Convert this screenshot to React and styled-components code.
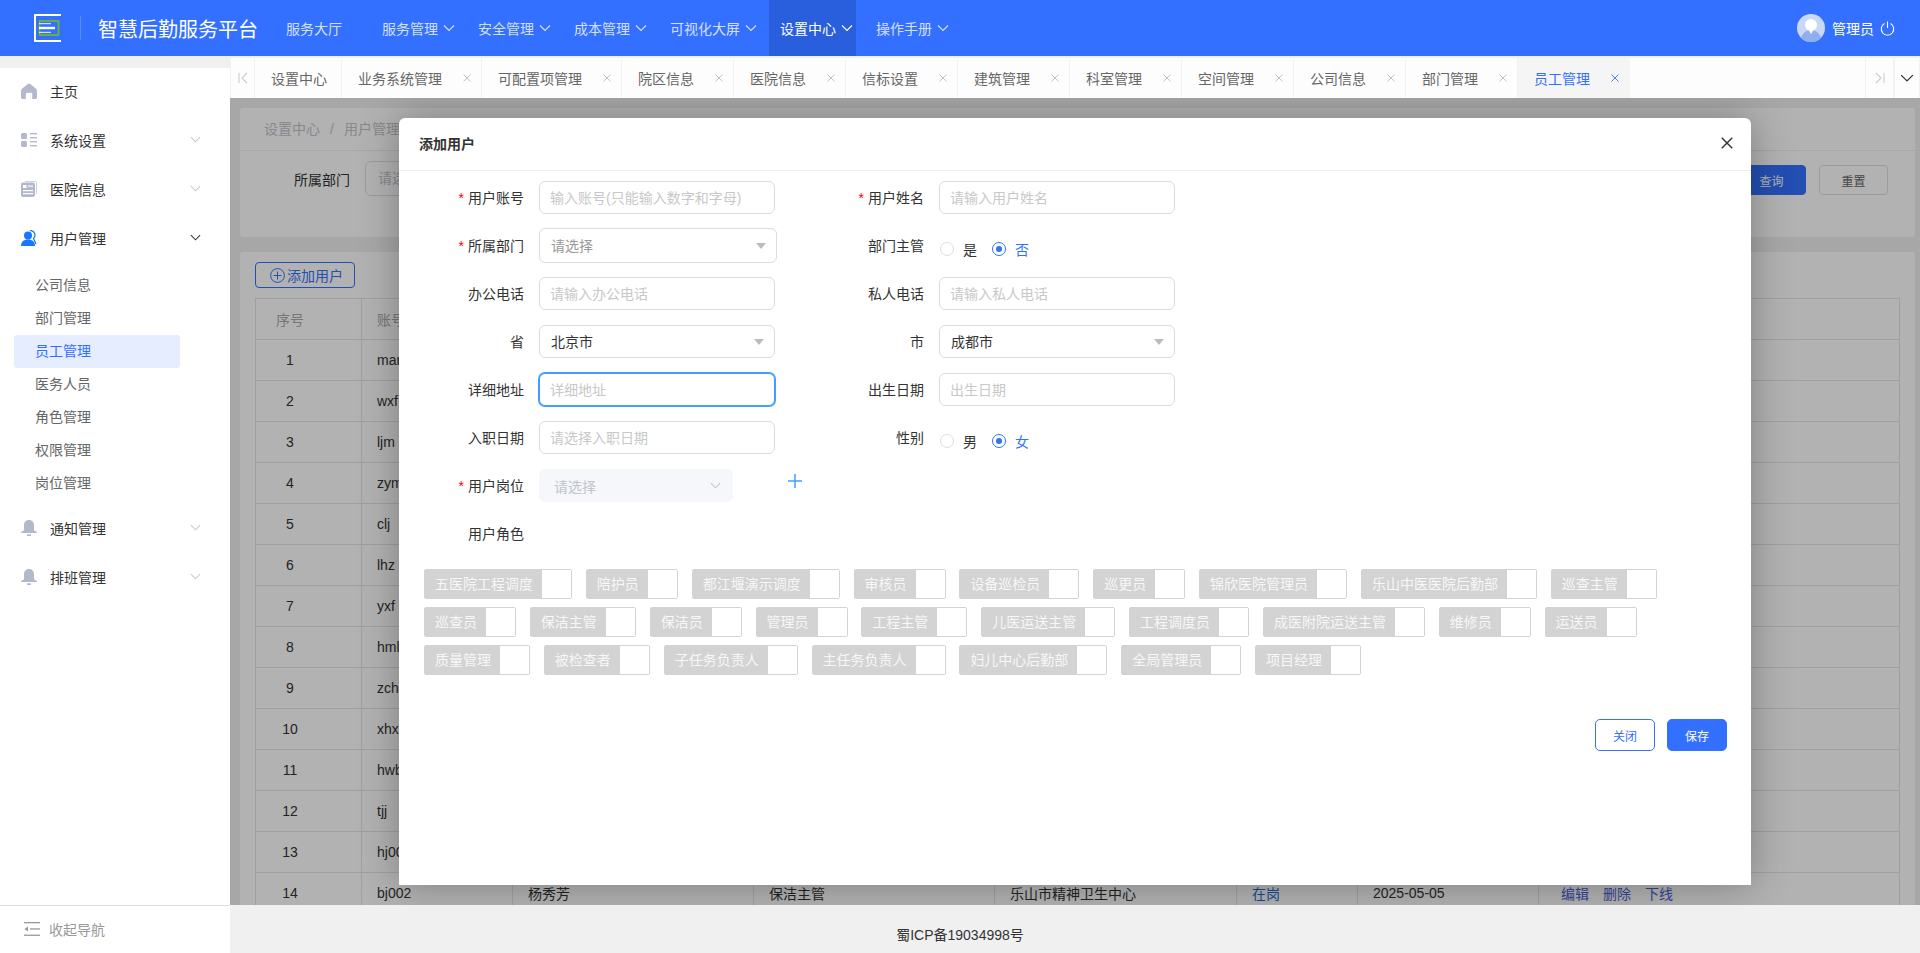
import styled, { createGlobalStyle } from 'styled-components'

const GlobalStyle = createGlobalStyle`
  html, body {
    margin: 0;
    padding: 0;
    height: 100%;
    overflow: hidden;
  }
  body {
    font-family: "Liberation Sans", "Noto Sans CJK SC", sans-serif;
    font-size: 14px;
    color: #333;
    background: #f0f0f0;
  }
  * {
    box-sizing: border-box;
  }
`

const navItems = [
  { label: '服务大厅', plain: true },
  { label: '服务管理' },
  { label: '安全管理' },
  { label: '成本管理' },
  { label: '可视化大屏' },
  { label: '设置中心', active: true },
  { label: '操作手册' },
]

const tabs = [
  { label: '业务系统管理' },
  { label: '可配置项管理' },
  { label: '院区信息' },
  { label: '医院信息' },
  { label: '信标设置' },
  { label: '建筑管理' },
  { label: '科室管理' },
  { label: '空间管理' },
  { label: '公司信息' },
  { label: '部门管理' },
  { label: '员工管理', active: true },
]

const subMenu = ['公司信息', '部门管理', '员工管理', '医务人员', '角色管理', '权限管理', '岗位管理']

const accounts = ['manager', 'wxf', 'ljm', 'zym', 'clj', 'lhz', 'yxf', 'hml', 'zch', 'xhx', 'hwb', 'tjj', 'hj001']

const roleTags = [
  '五医院工程调度', '陪护员', '都江堰演示调度', '审核员', '设备巡检员', '巡更员', '锦欣医院管理员', '乐山中医医院后勤部', '巡查主管',
  '巡查员', '保洁主管', '保洁员', '管理员', '工程主管', '儿医运送主管', '工程调度员', '成医附院运送主管', '维修员', '运送员',
  '质量管理', '被检查者', '子任务负责人', '主任务负责人', '妇儿中心后勤部', '全局管理员', '项目经理',
]

const Chevron = ({ size = 12, color = 'currentColor', width = 1.1 }) => (
  <svg width={size} height={size} viewBox="0 0 12 12" fill="none" stroke={color} strokeWidth={width}>
    <polyline points="1,3.5 6,8.5 11,3.5" />
  </svg>
)

const CloseMark = ({ size = 8, color = '#bbb' }) => (
  <svg width={size} height={size} viewBox="0 0 8 8" stroke={color} strokeWidth="0.9">
    <line x1="0.5" y1="0.5" x2="7.5" y2="7.5" />
    <line x1="7.5" y1="0.5" x2="0.5" y2="7.5" />
  </svg>
)

const Logo = () => (
  <svg width="27" height="28" viewBox="0 0 27 28">
    <path d="M27 1H1V27H27" fill="none" stroke="#fff" strokeWidth="2" />
    <rect x="5.500" y="7" width="19" height="14" fill="none" stroke="#6fb52c" strokeWidth="1.800" />
    <rect x="5" y="12.800" width="16" height="2.400" fill="#fff" />
    <rect x="5" y="9" width="12" height="1.200" fill="#cfe0ff" />
    <rect x="5" y="17.800" width="12" height="1.200" fill="#cfe0ff" />
  </svg>
)

const Avatar = () => (
  <svg width="28" height="28" viewBox="0 0 28 28">
    <circle cx="14" cy="14" r="14" fill="#c9d8f7" />
    <circle cx="14" cy="11" r="6" fill="#fff" />
    <path d="M4 24c2-6 6-8 10-8s8 2 10 8a14 14 0 0 1-20 0z" fill="#8fb0ee" />
    <path d="M11 15h6l-3 5z" fill="#fff" />
  </svg>
)

const PowerIcon = () => (
  <svg width="15" height="15" viewBox="0 0 15 15" fill="none" stroke="#fff" strokeWidth="1.1">
    <path d="M4.5 2.6a6.2 6.2 0 1 0 6 0" />
    <line x1="7.5" y1="0.5" x2="7.5" y2="7" />
  </svg>
)

const HomeIcon = () => (
  <svg width="16" height="16" viewBox="0 0 16 16" fill="#b4b8cb">
    <path d="M8 0.4c.5 0 .9.2 1.3.5l5.4 4.5c.8.6 1.3 1.5 1.3 2.5v6.600c0 .8-.6 1.4-1.4 1.4H11.2v-4.800c0-.8-.6-1.4-1.4-1.400H6.200c-.8 0-1.400.6-1.400 1.400V16H1.400C.6 16 0 15.400 0 14.600V8c0-1 .5-1.900 1.300-2.500L6.700.9C7.100.6 7.500.4 8 .4z" />
  </svg>
)

const GridIcon = () => (
  <svg width="16" height="14" viewBox="0 0 16 14" fill="#b4b8cb">
    <rect x="0" y="0" width="6" height="6" rx="1.500" />
    <rect x="0" y="8" width="6" height="6" rx="1.500" />
    <rect x="9" y="0" width="7" height="1.400" />
    <rect x="9" y="4" width="7" height="1.400" />
    <rect x="9" y="8" width="7" height="1.400" />
    <rect x="9" y="12" width="7" height="1.400" />
  </svg>
)

const DocIcon = () => (
  <svg width="16" height="16" viewBox="0 0 16 16">
    <path d="M4 0h10a2 2 0 0 1 2 2v11h-1V2a1 1 0 0 0-1-1H4z" fill="#cfd2de" />
    <rect x="0" y="1.500" width="14" height="14.500" rx="2" fill="#b4b8cb" />
    <rect x="2" y="4" width="3.500" height="3" fill="#fff" />
    <rect x="7" y="4.500" width="5" height="1.200" fill="#fff" />
    <rect x="2" y="9" width="10" height="1.200" fill="#fff" />
    <rect x="2" y="12" width="10" height="1.200" fill="#fff" />
  </svg>
)

const UsersIcon = () => (
  <svg width="17" height="16" viewBox="0 0 17 16">
    <circle cx="7" cy="5.500" r="4" fill="#1677ff" />
    <path d="M0 16c0-4 2.500-6.500 7-6.500s7 2.500 7 6.500z" fill="#1677ff" />
    <path d="M9 .6a4.500 4.500 0 0 1 5 4.500c0 1.500-.6 2.500-1.500 3.300l2.500 5.600" fill="none" stroke="#1677ff" strokeWidth="1.300" />
  </svg>
)

const BellIcon = () => (
  <svg width="16" height="16" viewBox="0 0 16 16" fill="#b4b8cb">
    <path d="M8 0c3 0 5 2.200 5 5v4.500c0 1 .8 1.500 2 2 .6.300 1 .6 1 1V13H0v-.500c0-.4.400-.7 1-1 1.200-.5 2-1 2-2V5c0-2.800 2-5 5-5z" />
    <rect x="6" y="14.300" width="4" height="1.700" rx=".5" />
  </svg>
)

const CollapseIcon = () => (
  <svg width="16" height="14" viewBox="0 0 16 14" fill="#999">
    <rect x="0" y="0" width="16" height="1.300" />
    <rect x="6" y="6.300" width="10" height="1.300" />
    <rect x="0" y="12.600" width="16" height="1.300" />
    <path d="M4 4.500v5L0.500 7z" />
  </svg>
)

const PlusCircle = () => (
  <svg width="15" height="15" viewBox="0 0 15 15" fill="none" stroke="#3370ff" strokeWidth="1">
    <circle cx="7.500" cy="7.500" r="6.900" />
    <line x1="7.500" y1="3.500" x2="7.500" y2="11.500" />
    <line x1="3.500" y1="7.500" x2="11.500" y2="7.500" />
  </svg>
)

const PlusIcon = () => (
  <svg width="14" height="14" viewBox="0 0 14 14" stroke="#409eff" strokeWidth="1.500">
    <line x1="7" y1="0" x2="7" y2="14" />
    <line x1="0" y1="7" x2="14" y2="7" />
  </svg>
)

const App = () => {
  return (
    <Page>
      <GlobalStyle />
      <Header>
        <LogoBox><Logo /></LogoBox>
        <TitleDivider />
        <Title>智慧后勤服务平台</Title>
        {navItems.map((item) => (
          <NavItem key={item.label} $plain={item.plain} $active={item.active}>
            {item.label}
            {!item.plain && <Chevron />}
          </NavItem>
        ))}
        <UserBox>
          <Avatar />
          <UserName>管理员</UserName>
          <PowerIcon />
        </UserBox>
      </Header>
      <Body>
        <Sidebar>
          <SideScroll>
            <SideItem>
              <SideIcon><HomeIcon /></SideIcon>
              <span>主页</span>
            </SideItem>
            <SideItem>
              <SideIcon><GridIcon /></SideIcon>
              <span>系统设置</span>
              <SideArrow><Chevron size={11} color="#c8c8c8" /></SideArrow>
            </SideItem>
            <SideItem>
              <SideIcon><DocIcon /></SideIcon>
              <span>医院信息</span>
              <SideArrow><Chevron size={11} color="#c8c8c8" /></SideArrow>
            </SideItem>
            <SideItem>
              <SideIcon><UsersIcon /></SideIcon>
              <span>用户管理</span>
              <SideArrow><Chevron size={11} color="#333" /></SideArrow>
            </SideItem>
            <SubList>
              {subMenu.map((name) => (
                <SubItem key={name} $active={name === '员工管理'}>{name}</SubItem>
              ))}
            </SubList>
            <SideItem>
              <SideIcon><BellIcon /></SideIcon>
              <span>通知管理</span>
              <SideArrow><Chevron size={11} color="#c8c8c8" /></SideArrow>
            </SideItem>
            <SideItem>
              <SideIcon><BellIcon /></SideIcon>
              <span>排班管理</span>
              <SideArrow><Chevron size={11} color="#c8c8c8" /></SideArrow>
            </SideItem>
          </SideScroll>
          <CollapseBar>
            <CollapseIcon />
            <span>收起导航</span>
          </CollapseBar>
        </Sidebar>
        <Main>
          <TabBar>
            <TabArrow $width={25}>
              <svg width="10" height="12" viewBox="0 0 10 12" fill="none" stroke="#ccc" strokeWidth="1.100">
                <line x1="1" y1="1" x2="1" y2="11" />
                <polyline points="9,1 4,6 9,11" />
              </svg>
            </TabArrow>
            <Tab>设置中心</Tab>
            {tabs.map((tab) => (
              <Tab key={tab.label} $active={tab.active}>
                {tab.label}
                <TabClose><CloseMark color={tab.active ? '#3370ff' : '#bbb'} /></TabClose>
              </Tab>
            ))}
            <TabSpacer />
            <TabArrow $width={29}>
              <svg width="10" height="12" viewBox="0 0 10 12" fill="none" stroke="#ccc" strokeWidth="1.100">
                <line x1="9" y1="1" x2="9" y2="11" />
                <polyline points="1,1 6,6 1,11" />
              </svg>
            </TabArrow>
            <TabArrow $width={26}>
              <Chevron size={14} color="#333" />
            </TabArrow>
          </TabBar>
          <Content>
            <Card>
              <Breadcrumb>设置中心<CrumbSlash>/</CrumbSlash>用户管理</Breadcrumb>
              <SearchRow>
                <SearchLabel>所属部门</SearchLabel>
                <SearchSelect>请选择</SearchSelect>
                <SearchButton $primary>查询</SearchButton>
                <SearchButton>重置</SearchButton>
              </SearchRow>
            </Card>
            <TableCard>
              <AddButton><PlusCircle />添加用户</AddButton>
              <Table>
                <colgroup>
                  <col style={{ width: 106 }} />
                  <col style={{ width: 151 }} />
                  <col style={{ width: 241 }} />
                  <col style={{ width: 241 }} />
                  <col style={{ width: 242 }} />
                  <col style={{ width: 121 }} />
                  <col style={{ width: 181 }} />
                  <col />
                </colgroup>
                <thead>
                  <tr>
                    <IndexHead>序号</IndexHead>
                    <th>账号</th>
                    <th>姓名</th>
                    <th>岗位</th>
                    <th>所属部门</th>
                    <th>状态</th>
                    <th>入职日期</th>
                    <th>操作</th>
                  </tr>
                </thead>
                <tbody>
                  {accounts.map((account, i) => (
                    <tr key={account}>
                      <IndexCell>{i + 1}</IndexCell>
                      <td>{account}</td>
                      <td /><td /><td /><td /><td /><td />
                    </tr>
                  ))}
                  <tr>
                    <IndexCell>14</IndexCell>
                    <td>bj002</td>
                    <td>杨秀芳</td>
                    <td>保洁主管</td>
                    <td>乐山市精神卫生中心</td>
                    <StatusCell>在岗</StatusCell>
                    <td>2025-05-05</td>
                    <ActionCell>
                      <ActionLink>编辑</ActionLink>
                      <ActionLink>删除</ActionLink>
                      <ActionLink>下线</ActionLink>
                    </ActionCell>
                  </tr>
                </tbody>
              </Table>
            </TableCard>
            <Overlay>
              <Modal>
                <ModalHead>
                  <ModalTitle>添加用户</ModalTitle>
                  <CloseMark size={12} color="#333" />
                </ModalHead>
                <FormGrid>
                  <FormItem>
                    <Label $required>用户账号</Label>
                    <Input placeholder="输入账号(只能输入数字和字母)" />
                  </FormItem>
                  <FormItem>
                    <Label $required>用户姓名</Label>
                    <Input placeholder="请输入用户姓名" />
                  </FormItem>
                  <FormItem>
                    <Label $required>所属部门</Label>
                    <Select $tall $placeholder>请选择<Caret /></Select>
                  </FormItem>
                  <FormItem>
                    <Label>部门主管</Label>
                    <RadioGroup>
                      <RadioOption><Radio />是</RadioOption>
                      <RadioOption $checked><Radio $checked />否</RadioOption>
                    </RadioGroup>
                  </FormItem>
                  <FormItem>
                    <Label>办公电话</Label>
                    <Input placeholder="请输入办公电话" />
                  </FormItem>
                  <FormItem>
                    <Label>私人电话</Label>
                    <Input placeholder="请输入私人电话" />
                  </FormItem>
                  <FormItem>
                    <Label>省</Label>
                    <Select>北京市<Caret /></Select>
                  </FormItem>
                  <FormItem>
                    <Label>市</Label>
                    <Select>成都市<Caret /></Select>
                  </FormItem>
                  <FormItem>
                    <Label>详细地址</Label>
                    <Input $focused placeholder="详细地址" />
                  </FormItem>
                  <FormItem>
                    <Label>出生日期</Label>
                    <Input placeholder="出生日期" />
                  </FormItem>
                  <FormItem>
                    <Label>入职日期</Label>
                    <Input placeholder="请选择入职日期" />
                  </FormItem>
                  <FormItem>
                    <Label>性别</Label>
                    <RadioGroup>
                      <RadioOption><Radio />男</RadioOption>
                      <RadioOption $checked><Radio $checked />女</RadioOption>
                    </RadioGroup>
                  </FormItem>
                  <FormItem>
                    <Label $required>用户岗位</Label>
                    <DisabledSelect>请选择<Chevron size={11} color="#c0c4cc" /></DisabledSelect>
                    <AddPost><PlusIcon /></AddPost>
                  </FormItem>
                  <div />
                  <FormItem>
                    <Label>用户角色</Label>
                  </FormItem>
                </FormGrid>
                <TagList>
                  {roleTags.map((name) => (
                    <RoleTag key={name}>
                      <RoleName>{name}</RoleName>
                      <RoleBox />
                    </RoleTag>
                  ))}
                </TagList>
                <ModalFooter>
                  <FooterButton>关闭</FooterButton>
                  <FooterButton $primary>保存</FooterButton>
                </ModalFooter>
              </Modal>
            </Overlay>
          </Content>
          <PageFooter>蜀ICP备19034998号</PageFooter>
        </Main>
      </Body>
    </Page>
  )
}

export default App

const Page = styled.div`
  width: 100%;
  height: 100vh;
  display: flex;
  flex-direction: column;
  overflow: hidden;
`

const Header = styled.header`
  height: 56px;
  flex: none;
  display: flex;
  align-items: center;
  padding-left: 34px;
  background-color: #3370ff;
  color: #fff;
`

const LogoBox = styled.div`
  display: flex;
  width: 27px;
  height: 28px;
`

const TitleDivider = styled.div`
  width: 1px;
  height: 24px;
  margin: 0 17px 0 19px;
  background-color: rgba(255, 255, 255, 0.2);
`

const Title = styled.div`
  width: 160px;
  margin-right: 17px;
  font-size: 20px;
  font-weight: 400;
  white-space: nowrap;
`

const NavItem = styled.div`
  height: 56px;
  display: flex;
  align-items: center;
  gap: 5px;
  padding: 0 3px 0 11px;
  margin-right: ${(props) => (props.$plain ? '26px' : '9px')};
  white-space: nowrap;
  color: ${(props) => (props.$active ? '#fff' : 'rgba(255, 255, 255, 0.8)')};
  background-color: ${(props) => (props.$active ? '#295edc' : 'transparent')};
`

const UserBox = styled.div`
  margin-left: auto;
  padding-right: 25px;
  display: flex;
  align-items: center;
`

const UserName = styled.span`
  margin: 0 6px 0 7px;
`

const Body = styled.div`
  flex: 1;
  display: flex;
  min-height: 0;
`

const Sidebar = styled.aside`
  width: 230px;
  flex: none;
  margin-top: 12px;
  display: flex;
  flex-direction: column;
  background-color: #fff;
`

const SideScroll = styled.div`
  flex: 1;
  margin-top: -2px;
`

const SideItem = styled.div`
  height: 49px;
  display: flex;
  align-items: center;
  padding: 0 29px 0 21px;
  color: #333;
`

const SideIcon = styled.span`
  width: 29px;
  display: flex;
  align-items: center;
`

const SideArrow = styled.span`
  margin-left: auto;
  display: flex;
`

const SubList = styled.div`
  padding: 7px 0 0 14px;
  margin-bottom: 3px;
`

const SubItem = styled.div`
  width: 166px;
  height: 33px;
  line-height: 33px;
  padding-left: 21px;
  border-radius: 3px;
  color: ${(props) => (props.$active ? '#3370ff' : '#666')};
  background-color: ${(props) => (props.$active ? '#e6edff' : 'transparent')};
`

const CollapseBar = styled.div`
  height: 48px;
  flex: none;
  display: flex;
  align-items: center;
  gap: 9px;
  padding: 0 0 2px 24px;
  border-top: 1px solid #ddd;
  color: #999;
`

const Main = styled.main`
  flex: 1;
  min-width: 0;
  display: flex;
  flex-direction: column;
  padding-top: 2px;
`

const TabBar = styled.div`
  height: 40px;
  flex: none;
  display: flex;
  background-color: #fdfdfd;
`

const TabArrow = styled.div`
  width: ${(props) => props.$width}px;
  display: flex;
  align-items: center;
  justify-content: center;
  border-right: 1px solid #f2f2f2;
  border-left: 1px solid #f2f2f2;
`

const Tab = styled.div`
  display: flex;
  align-items: center;
  padding: 0 14px 0 16px;
  white-space: nowrap;
  border-right: 1px solid #f2f2f2;
  color: ${(props) => (props.$active ? '#3370ff' : '#666')};
  background-color: ${(props) => (props.$active ? '#f5f5f5' : 'transparent')};
`

const TabClose = styled.span`
  display: flex;
  margin: 0 -4px 0 21px;
`

const TabSpacer = styled.div`
  flex: 1;
`

const Content = styled.div`
  position: relative;
  flex: 1;
  min-height: 0;
  padding: 10px 5px 0 10px;
  overflow: hidden;
  background-color: #f0f0f0;
`

const Card = styled.section`
  height: 129px;
  background-color: #fff;
  border-radius: 3px;
`

const Breadcrumb = styled.div`
  height: 43px;
  line-height: 42px;
  padding-left: 24px;
  border-bottom: 1px solid #eee;
  color: #c0c4cc;
`

const CrumbSlash = styled.span`
  margin: 0 10px;
`

const SearchRow = styled.div`
  display: flex;
  align-items: flex-start;
  padding: 10px 27px 0 54px;
`

const SearchLabel = styled.div`
  width: 71px;
  height: 35px;
  line-height: 38px;
  color: #333;
`

const SearchSelect = styled.div`
  width: 238px;
  height: 35px;
  line-height: 33px;
  padding-left: 12px;
  margin-right: auto;
  border: 1px solid #dcdfe6;
  border-radius: 6px;
  color: #c0c4cc;
`

const SearchButton = styled.button`
  width: 69px;
  height: 30px;
  margin: 4px 0 0 13px;
  padding: 0;
  border-radius: 4px;
  font: inherit;
  font-size: 12px;
  border: 1px solid ${(props) => (props.$primary ? '#3370ff' : '#dcdfe6')};
  background-color: ${(props) => (props.$primary ? '#3370ff' : '#fff')};
  color: ${(props) => (props.$primary ? '#fff' : '#666')};
`

const TableCard = styled.section`
  margin-top: 15px;
  padding: 10px 15px 0;
  background-color: #fff;
  border-radius: 3px;
`

const AddButton = styled.button`
  width: 100px;
  height: 26px;
  padding: 0 0 0 14px;
  display: flex;
  align-items: center;
  gap: 2px;
  border: 1px solid #3370ff;
  border-radius: 4px;
  background-color: #fff;
  color: #3370ff;
  font: inherit;
`

const Table = styled.table`
  width: 100%;
  margin-top: 10px;
  table-layout: fixed;
  border-collapse: collapse;

  th, td {
    height: 41px;
    padding: 0 15px;
    border: 1px solid #e5e5e5;
    text-align: left;
    font-weight: 400;
    white-space: nowrap;
    overflow: hidden;
  }

  th {
    color: #aaa;
  }
`

const IndexHead = styled.th`
  && {
    padding: 0 37px 0 0;
    text-align: center;
  }
`

const IndexCell = styled.td`
  && {
    padding: 0 37px 0 0;
    text-align: center;
  }
`

const StatusCell = styled.td`
  color: #1f6fd6;
`

const ActionCell = styled.td`
  && {
    padding-left: 22px;
  }
`

const ActionLink = styled.span`
  margin-right: 14px;
  color: #4a63d8;
`

const Overlay = styled.div`
  position: absolute;
  inset: 0;
  background-color: rgba(0, 0, 0, 0.3);
`

const Modal = styled.div`
  width: 80%;
  height: 767px;
  margin: 20px auto 0;
  display: flex;
  flex-direction: column;
  background-color: #fff;
  border-radius: 6px 6px 0 0;
  box-shadow: 0 0 40px rgba(0, 0, 0, 0.3);
`

const ModalHead = styled.div`
  height: 53px;
  flex: none;
  display: flex;
  align-items: center;
  justify-content: space-between;
  padding: 0 18px 2px 20px;
  border-bottom: 1px solid #eee;
`

const ModalTitle = styled.div`
  font-weight: 700;
  font-size: 14px;
  color: #333;
`

const FormGrid = styled.div`
  display: grid;
  grid-template-columns: 400px 400px;
  grid-auto-rows: 48px;
  padding-top: 10px;
`

const FormItem = styled.div`
  display: flex;
  align-items: flex-start;
`

const Label = styled.label`
  width: 125px;
  flex: none;
  margin-right: 15px;
  padding-top: 1px;
  line-height: 33px;
  text-align: right;
  color: #333;

  ${(props) => props.$required && `
    &::before {
      content: '*';
      margin-right: 4px;
      color: #f00;
    }
  `}
`

const Input = styled.input`
  width: 236px;
  height: 33px;
  padding: 0 10px;
  font: inherit;
  outline: none;
  border-radius: 6px;
  color: #333;
  border: 1px solid ${(props) => (props.$focused ? '#409eff' : '#dcdcdc')};
  box-shadow: ${(props) => (props.$focused ? '0 0 0 1px #409eff' : 'none')};

  &::placeholder {
    color: #c8c8c8;
    opacity: 1;
  }
`

const Select = styled.div`
  width: ${(props) => (props.$tall ? '238px' : '236px')};
  height: ${(props) => (props.$tall ? '35px' : '33px')};
  margin-top: ${(props) => (props.$tall ? '-1px' : '0')};
  padding: 0 10px 1px 11px;
  display: flex;
  align-items: center;
  justify-content: space-between;
  border: 1px solid #dcdcdc;
  border-radius: 6px;
  color: ${(props) => (props.$placeholder ? '#999' : '#333')};
`

const Caret = styled.span`
  width: 0;
  height: 0;
  margin-top: 2px;
  border-left: 5.5px solid transparent;
  border-right: 5.5px solid transparent;
  border-top: 6px solid #bbb;
`

const DisabledSelect = styled.div`
  width: 194px;
  height: 33px;
  flex: none;
  padding: 0 12px 0 15px;
  display: flex;
  align-items: center;
  justify-content: space-between;
  border-radius: 6px;
  background-color: #f5f7fa;
  color: #c0c4cc;
`

const AddPost = styled.span`
  display: flex;
  flex: none;
  margin: 5px 0 0 55px;
`

const RadioGroup = styled.div`
  height: 39px;
  margin-left: 1px;
  display: flex;
  align-items: center;
  gap: 15px;
`

const RadioOption = styled.span`
  display: flex;
  align-items: center;
  gap: 9px;
  color: ${(props) => (props.$checked ? '#3370ff' : '#333')};
`

const Radio = styled.span`
  width: 14px;
  height: 14px;
  display: flex;
  align-items: center;
  justify-content: center;
  border-radius: 50%;
  border: 1px solid ${(props) => (props.$checked ? '#3370ff' : '#dcdcdc')};

  ${(props) => props.$checked && `
    &::after {
      content: '';
      width: 6px;
      height: 6px;
      border-radius: 50%;
      background-color: #3370ff;
    }
  `}
`

const TagList = styled.div`
  display: flex;
  flex-wrap: wrap;
  gap: 8px 13.85px;
  padding: 4px 25px 0;
`

const RoleTag = styled.div`
  height: 30px;
  display: flex;
  border: 1px solid #d3d3d3;
  border-radius: 2px;
`

const RoleName = styled.span`
  padding: 0 9px 0 10px;
  line-height: 28px;
  background-color: #d3d3d3;
  color: #f7f7f7;
`

const RoleBox = styled.span`
  width: 29px;
  background-color: #fff;
`

const ModalFooter = styled.div`
  display: flex;
  justify-content: flex-end;
  gap: 12px;
  padding: 44px 24px 0 0;
`

const FooterButton = styled.button`
  width: 60px;
  height: 32px;
  padding: 0;
  font: inherit;
  font-size: 12px;
  border-radius: 5px;
  border: 1px solid #3370ff;
  background-color: ${(props) => (props.$primary ? '#3370ff' : '#fff')};
  color: ${(props) => (props.$primary ? '#fff' : '#3370ff')};
`

const PageFooter = styled.footer`
  height: 48px;
  flex: none;
  padding: 21px 230px 0 0;
  text-align: center;
  line-height: 19px;
  color: #333;
  background-color: #f0f0f0;
`
